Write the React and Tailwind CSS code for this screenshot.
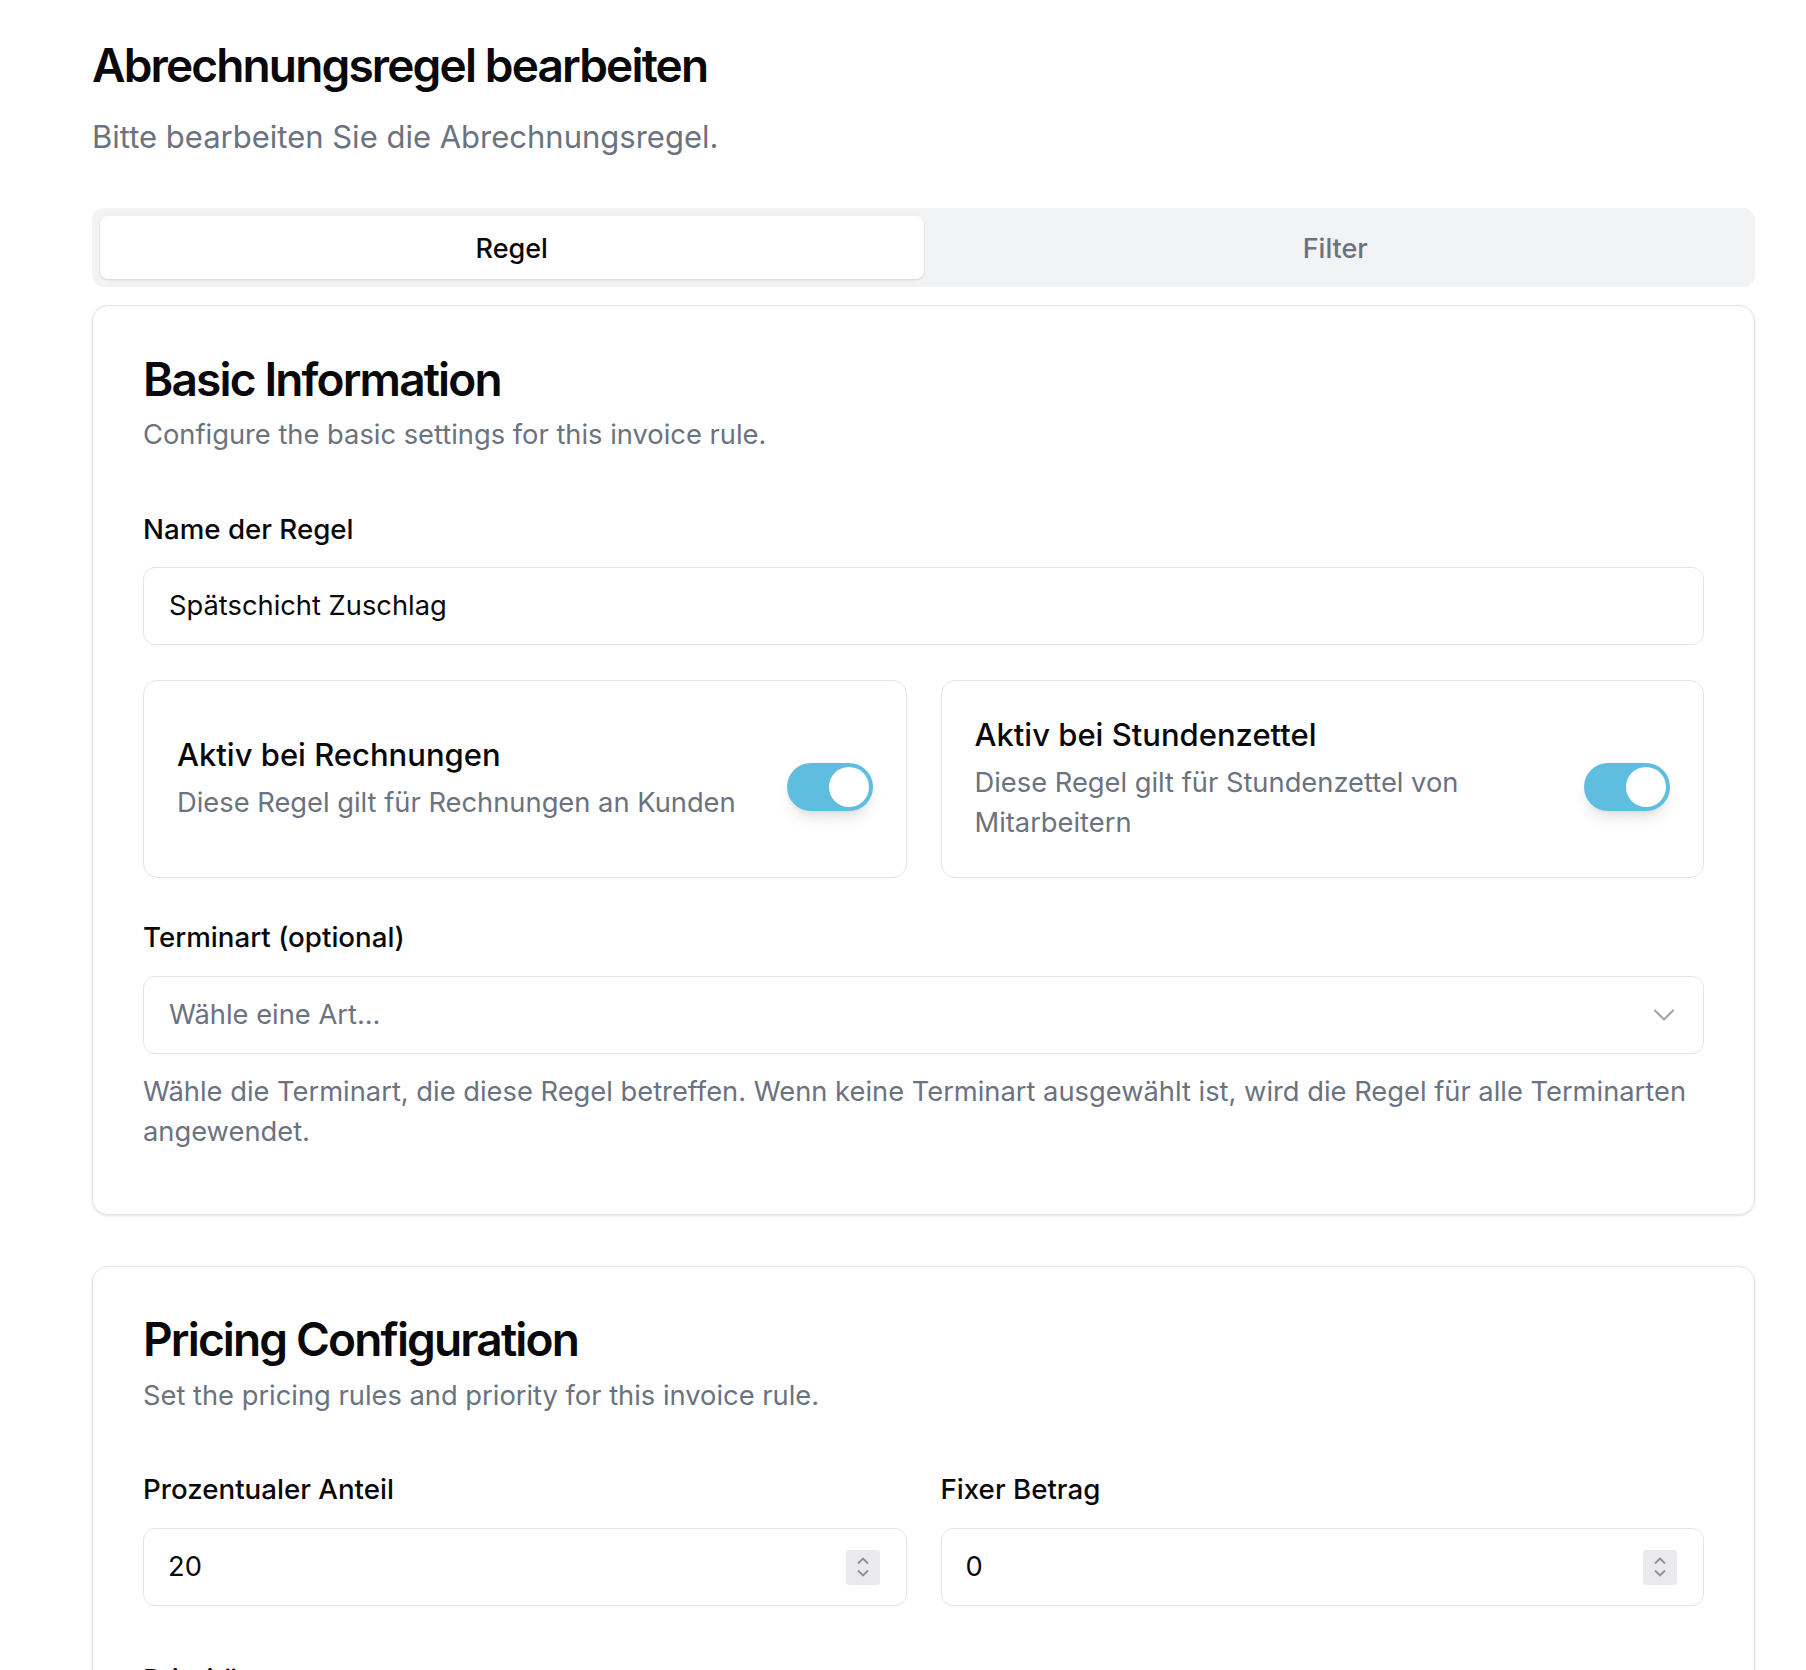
import { ChevronDown } from "lucide-react";

function Toggle() {
  return (
    <div className="relative mt-[16px] h-[48px] w-[86px] shrink-0 rounded-full bg-[#5fbee0] shadow-lg">
      <div className="absolute right-[4px] top-[4px] h-[40px] w-[40px] rounded-full bg-white" />
    </div>
  );
}

function ToggleCard({ title, desc }) {
  return (
    <div className="flex items-center gap-6 rounded-[14px] border border-[#e4e4e7] px-[33px] py-[34px]">
      <div className="flex-1">
        <div className="text-[31px] font-medium leading-[40px] text-[#09090b]">{title}</div>
        <div className="mt-2 text-[27.3px] leading-[40px] text-[#6b7280]">{desc}</div>
      </div>
      <Toggle />
    </div>
  );
}

function Spinner() {
  return (
    <div className="flex h-[35px] w-[34px] flex-col items-center justify-center gap-[4px] rounded-[3px] bg-[#e9e9ee]">
      <svg width="14" height="9" viewBox="0 0 14 9" fill="none" stroke="#8e8e93" strokeWidth="1.8">
        <path d="M2 7.5 7 2.5l5 5" />
      </svg>
      <svg width="14" height="9" viewBox="0 0 14 9" fill="none" stroke="#8e8e93" strokeWidth="1.8">
        <path d="M2 1.5 7 6.5l5-5" />
      </svg>
    </div>
  );
}

function NumberField({ label, value }) {
  return (
    <div>
      <div className="text-[27.7px] font-medium leading-[38px] text-[#09090b]">{label}</div>
      <div className="mt-5 flex h-[78px] items-center justify-between rounded-[12px] border border-[#e4e4e7] pl-[24px] pr-[26px]">
        <span className="text-[27.3px] text-[#09090b]">{value}</span>
        <Spinner />
      </div>
    </div>
  );
}

export default function App() {
  return (
    <div className="min-h-screen bg-white pl-[92px] pr-[51px] pt-[40px] font-['Inter','Noto_Sans',sans-serif] antialiased">
      {/* Header */}
      <h1 className="text-[46px] font-semibold leading-[50px] tracking-[-0.04em] text-[#09090b]">
        Abrechnungsregel bearbeiten
      </h1>
      <p className="mt-[27px] text-[31px] leading-[40px] text-[#6b7280]">
        Bitte bearbeiten Sie die Abrechnungsregel.
      </p>

      {/* Tabs */}
      <div className="mt-[51px] grid h-[79px] grid-cols-2 rounded-[12px] bg-[#f2f3f5] p-2">
        <div className="flex items-center justify-center rounded-[8px] bg-white pt-[3px] text-[27px] font-medium text-[#09090b] shadow-sm">
          Regel
        </div>
        <div className="flex items-center justify-center pt-[3px] text-[27px] font-medium text-[#6b7280]">
          Filter
        </div>
      </div>

      {/* Basic Information */}
      <div className="mt-[18px] rounded-[16px] border border-[#e4e4e7] px-[50px] pb-[62px] pt-[49px] shadow-sm">
        <h2 className="text-[46px] font-semibold leading-[48px] tracking-[-0.04em] text-[#09090b]">
          Basic Information
        </h2>
        <p className="mt-[13px] text-[27.3px] leading-[38px] text-[#6b7280]">
          Configure the basic settings for this invoice rule.
        </p>

        <div className="mt-[56px] text-[27.7px] font-medium leading-[38px] text-[#09090b]">
          Name der Regel
        </div>
        <div className="mt-[19px] flex h-[78px] items-center rounded-[12px] border border-[#e4e4e7] px-[25px] text-[27.3px] text-[#09090b]">
          Spätschicht Zuschlag
        </div>

        <div className="mt-[35px] grid grid-cols-2 gap-[34px]">
          <ToggleCard title="Aktiv bei Rechnungen" desc="Diese Regel gilt für Rechnungen an Kunden" />
          <ToggleCard title="Aktiv bei Stundenzettel" desc="Diese Regel gilt für Stundenzettel von Mitarbeitern" />
        </div>

        <div className="mt-[40px] text-[27.7px] font-medium leading-[38px] text-[#09090b]">
          Terminart (optional)
        </div>
        <div className="mt-[20px] flex h-[78px] items-center justify-between rounded-[12px] border border-[#e4e4e7] pl-[25px] pr-[21px]">
          <span className="text-[27.3px] text-[#6b7280]">Wähle eine Art...</span>
          <ChevronDown size={36} strokeWidth={1.4} className="text-[#a1a1aa]" />
        </div>
        <p className="mt-[18px] text-[27.3px] leading-[40px] text-[#6b7280]">
          Wähle die Terminart, die diese Regel betreffen. Wenn keine Terminart ausgewählt ist, wird die Regel für alle Terminarten angewendet.
        </p>
      </div>

      {/* Pricing Configuration */}
      <div className="mt-[51px] rounded-[16px] border border-[#e4e4e7] px-[50px] pb-[62px] pt-[48px] shadow-sm">
        <h2 className="text-[46px] font-semibold leading-[48px] tracking-[-0.04em] text-[#09090b]">
          Pricing Configuration
        </h2>
        <p className="mt-[14px] text-[27.3px] leading-[38px] text-[#6b7280]">
          Set the pricing rules and priority for this invoice rule.
        </p>

        <div className="mt-[55px] grid grid-cols-2 gap-[34px]">
          <NumberField label="Prozentualer Anteil" value="20" />
          <NumberField label="Fixer Betrag" value="0" />
        </div>

        <div className="mt-[54px] text-[27.7px] font-medium leading-[38px] text-[#09090b]">
          Priorität
        </div>
        <div className="mt-[20px] flex h-[78px] items-center rounded-[12px] border border-[#e4e4e7] px-[25px] text-[27.3px] text-[#09090b]">
          1
        </div>
      </div>
    </div>
  );
}
